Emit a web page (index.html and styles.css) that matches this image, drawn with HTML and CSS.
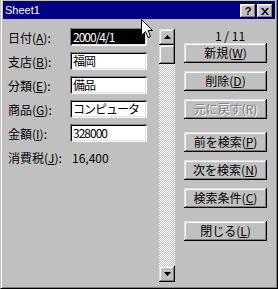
FILE: index.html
```html
<!DOCTYPE html>
<html lang="ja">
<head>
  <meta charset="UTF-8">
  <title>Sheet1</title>
  <link rel="stylesheet" href="styles.css">
</head>
<body>

  <div class="window">
    <div class="titlebar">
      <span class="title">Sheet1</span>
      <div class="caption-buttons">
        <div class="cap-btn help">?</div>
        <div class="cap-btn close">
          <svg width="8" height="7" viewBox="0 0 8 7">
            <path d="M0 0h2l2 2.5 2-2.5h2l-3 3.5 3 3.5h-2l-2-2.5-2 2.5h-2l3-3.5z" fill="#000"/>
          </svg>
        </div>
      </div>
    </div>

    <div class="client">
      <div class="fields">
        <div class="row">
          <span class="label">日付(<u>A</u>):</span>
          <div class="field selected">2000/4/1</div>
        </div>
        <div class="row">
          <span class="label">支店(<u>B</u>):</span>
          <div class="field">福岡</div>
        </div>
        <div class="row">
          <span class="label">分類(<u>E</u>):</span>
          <div class="field">備品</div>
        </div>
        <div class="row">
          <span class="label">商品(<u>G</u>):</span>
          <div class="field">コンピュータ</div>
        </div>
        <div class="row">
          <span class="label">金額(<u>I</u>):</span>
          <div class="field">328000</div>
        </div>
        <div class="row">
          <span class="label">消費税(<u>J</u>):</span>
          <span class="value">16,400</span>
        </div>
      </div>

      <div class="scrollbar">
        <div class="sb-btn">
          <svg width="7" height="4" viewBox="0 0 7 4"><path d="M3.5 0L7 4H0z" fill="#000"/></svg>
        </div>
        <div class="sb-thumb"></div>
        <div class="sb-track"></div>
        <div class="sb-btn">
          <svg width="7" height="4" viewBox="0 0 7 4"><path d="M0 0h7L3.5 4z" fill="#000"/></svg>
        </div>
      </div>

      <div class="actions">
        <div class="counter">1 / 11</div>
        <div class="btn-group">
          <div class="btn">新規(<u>W</u>)</div>
          <div class="btn">削除(<u>D</u>)</div>
          <div class="btn disabled">元に戻す(R)</div>
        </div>
        <div class="btn-group">
          <div class="btn">前を検索(<u>P</u>)</div>
          <div class="btn">次を検索(<u>N</u>)</div>
          <div class="btn">検索条件(<u>C</u>)</div>
        </div>
        <div class="btn-group">
          <div class="btn">閉じる(<u>L</u>)</div>
        </div>
      </div>
    </div>

    <!-- mouse pointer left over the dialog -->
    <svg class="cursor" width="13" height="20" viewBox="0 0 13 20">
      <path d="M0.5 0.5V16.5L4.5 12.5L7 18.5L9.5 17.5L7 11.5H11.5Z" fill="#fff" stroke="#000" stroke-width="1"/>
    </svg>
  </div>

</body>
</html>
```

FILE: styles.css
```css
body {
  margin: 0;
  background: #c0c0c0;
  font-family: "Noto Sans CJK JP", "Liberation Sans", sans-serif;
  font-size: 12px;
  color: #000;
}
.window {
  position: relative;
  width: 278px;
  height: 289px;
  box-sizing: border-box;
  background: #c0c0c0;
  border-left: 1px solid #c0c0c0;
  border-right: 1px solid #000;
  border-bottom: 1px solid #000;
  box-shadow: inset 1px 0 #fff, inset -1px -1px #808080;
  padding: 1px 2px 2px 2px;
  display: flex;
  flex-direction: column;
}
.titlebar {
  height: 18px;
  background: #000080;
  color: #fff;
  display: flex;
  align-items: center;
  padding-left: 2px;
}
.title {
  flex: 1;
  font-family: "Liberation Sans", sans-serif;
  font-size: 11px;
  line-height: 18px;
}
.caption-buttons {
  display: flex;
  align-self: flex-end;
  gap: 1px;
  margin: 0 2px 1px 0;
}
.cap-btn {
  width: 16px;
  height: 14px;
  box-sizing: border-box;
  background: #c0c0c0;
  box-shadow: inset -1px -1px #000, inset 1px 1px #fff, inset -2px -2px #808080, inset 2px 2px #dfdfdf;
  display: flex;
  align-items: center;
  justify-content: center;
  color: #000;
}
.help {
  font-family: "Liberation Sans", sans-serif;
  font-weight: bold;
  font-size: 11px;
  line-height: 14px;
}
.client {
  flex: 1;
  display: flex;
  padding-left: 5px;
}
.fields {
  margin-top: 9px;
  width: 139px;
  display: flex;
  flex-direction: column;
  gap: 6px;
}
.row {
  display: flex;
  height: 18px;
  align-items: center;
}
.label {
  width: 62px;
  white-space: nowrap;
}
.field {
  width: 77px;
  height: 18px;
  box-sizing: border-box;
  padding-left: 3px;
  line-height: 18px;
  letter-spacing: -1px;
  background: #fff;
  box-shadow: inset 1px 1px #808080, inset -1px -1px #fff, inset 2px 2px #000, inset -2px -2px #dfdfdf;
  white-space: nowrap;
  overflow: hidden;
}
.field.selected {
  background: #000;
  color: #fff;
}
.value {
  padding-left: 2px;
}
.scrollbar {
  margin: 10px 0 0 12px;
  width: 16px;
  height: 253px;
  display: flex;
  flex-direction: column;
}
.sb-btn, .sb-thumb, .btn {
  background: #c0c0c0;
  box-shadow: inset -1px -1px #000, inset 1px 1px #dfdfdf, inset -2px -2px #808080, inset 2px 2px #fff;
}
.sb-btn {
  height: 16px;
  display: flex;
  align-items: center;
  justify-content: center;
}
.sb-thumb {
  height: 19px;
}
.sb-track {
  flex: 1;
  background: conic-gradient(#fff 25%, #c0c0c0 0 50%, #fff 0 75%, #c0c0c0 0);
  background-size: 2px 2px;
}
.actions {
  margin: 10px 0 0 9px;
  width: 83px;
  display: flex;
  flex-direction: column;
  gap: 13px;
}
.counter {
  height: 14px;
  line-height: 14px;
  padding-left: 31px;
  margin-bottom: -13px;
}
.btn-group {
  display: flex;
  flex-direction: column;
  gap: 8px;
}
.btn {
  height: 20px;
  line-height: 20px;
  text-align: center;
  white-space: nowrap;
}
.btn.disabled {
  color: #808080;
  text-shadow: 1px 1px #fff;
}
.cursor {
  position: absolute;
  left: 140px;
  top: 19px;
}
```
